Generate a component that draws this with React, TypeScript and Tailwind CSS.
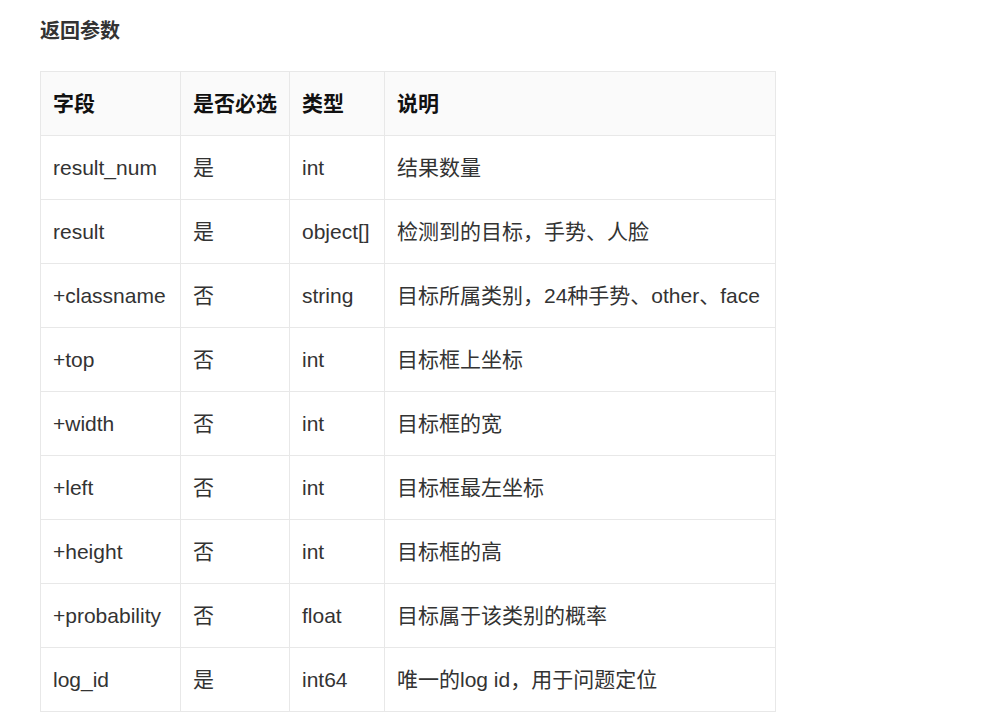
const rows = [
  ["result_num", "是", "int", "结果数量"],
  ["result", "是", "object[]", "检测到的目标，手势、人脸"],
  ["+classname", "否", "string", "目标所属类别，24种手势、other、face"],
  ["+top", "否", "int", "目标框上坐标"],
  ["+width", "否", "int", "目标框的宽"],
  ["+left", "否", "int", "目标框最左坐标"],
  ["+height", "否", "int", "目标框的高"],
  ["+probability", "否", "float", "目标属于该类别的概率"],
  ["log_id", "是", "int64", "唯一的log id，用于问题定位"],
];
const widths = ["w-[140px]", "w-[109px]", "w-[95px]", "w-[391px]"];
export default function App() {
  return (
    <div className="bg-white w-[988px] h-[717px] overflow-hidden text-[#333] pl-[40px] pt-[17px]" style={{ fontFamily: '"Liberation Sans", "Noto Sans CJK SC", sans-serif' }}>
      <h3 className="text-[20px] font-bold leading-[28px] text-[#333]">返回参数</h3>
      <table className="mt-[26px] border-collapse table-fixed w-[735px] text-[21px]">
        <thead>
          <tr className="bg-[#fafafa] h-[64px]">
            {["字段", "是否必选", "类型", "说明"].map((h, i) => (
              <th key={h} className={`${widths[i]} border border-[#e8e8e8] text-left font-bold pl-[12px] text-[#111]`}>{h}</th>
            ))}
          </tr>
        </thead>
        <tbody>
          {rows.map((r) => (
            <tr key={r[0]} className="h-[64px]">
              {r.map((c, i) => (
                <td key={i} className="border border-[#e8e8e8] pl-[12px] whitespace-nowrap overflow-visible">{c}</td>
              ))}
            </tr>
          ))}
        </tbody>
      </table>
    </div>
  );
}
